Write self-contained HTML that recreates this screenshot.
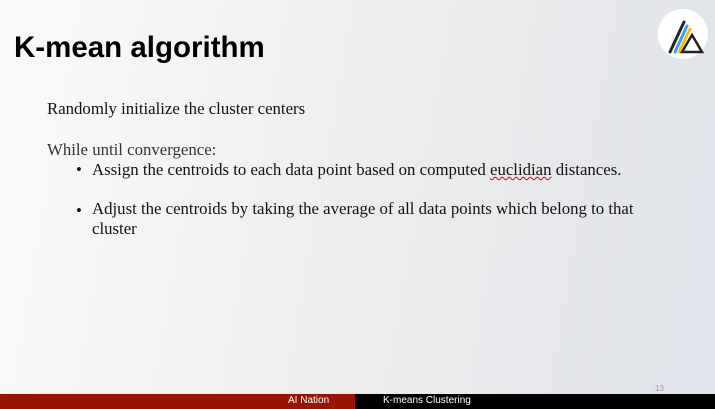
<!DOCTYPE html>
<html><head><style>
body{margin:0;width:715px;height:409px;overflow:hidden;font-family:"Liberation Serif",serif;}
.bg{position:absolute;left:0;top:0;width:715px;height:409px;background:linear-gradient(100deg,#fafafa 0%,#ececec 55%,#dfe3ea 100%);}
h1{position:absolute;left:14px;top:31px;margin:0;font:bold 29.5px "Liberation Sans",sans-serif;color:#000;}
.t{position:absolute;font-size:16.8px;color:#111;}
.b{position:absolute;font-size:16.8px;color:#111;}
.foot{position:absolute;left:0;top:394px;width:715px;height:15px;background:#000;}
.red{position:absolute;left:0;top:394px;width:355px;height:15px;background:#9a1405;}
.ft{position:absolute;top:395px;font:10px "Liberation Sans",sans-serif;color:#fff;}
</style></head><body>
<div class="bg"></div>
<svg style="position:absolute;left:657px;top:8px" width="52" height="52" viewBox="0 0 52 52">
<circle cx="26" cy="26" r="25" fill="#fff"/>
<line x1="13" y1="44" x2="27" y2="14" stroke="#222" stroke-width="3" stroke-linecap="round"/>
<line x1="18" y1="44" x2="30" y2="18" stroke="#3aa0e8" stroke-width="3" stroke-linecap="round"/>
<line x1="22" y1="44" x2="33" y2="21" stroke="#f2c014" stroke-width="3" stroke-linecap="round"/>
<path d="M25 44 L35 27 L45 44 Z" fill="none" stroke="#222" stroke-width="2.5"/>
</svg>
<h1>K-mean algorithm</h1>
<div class="t" style="left:47px;top:99px">Randomly initialize the cluster centers</div>
<div class="t" style="left:47px;top:140px;color:#333">While until convergence:</div>
<div class="b" style="left:76px;top:160px">•</div>
<div class="t" style="left:92px;top:160px">Assign the centroids to each data point based on computed <span style="text-decoration:underline wavy #c00;text-decoration-thickness:1px">euclidian</span> distances.</div>
<div class="b" style="left:76px;top:201px">•</div>
<div class="t" style="left:92px;top:199px;width:550px;line-height:20px">Adjust the centroids by taking the average of all data points which belong to that cluster</div>
<div style="position:absolute;left:655px;top:384px;font:8px 'Liberation Sans',sans-serif;color:#999">13</div>
<div class="foot"></div><div class="red"></div>
<div class="ft" style="left:288px">AI Nation</div>
<div class="ft" style="left:383px">K-means Clustering</div>
</body></html>
